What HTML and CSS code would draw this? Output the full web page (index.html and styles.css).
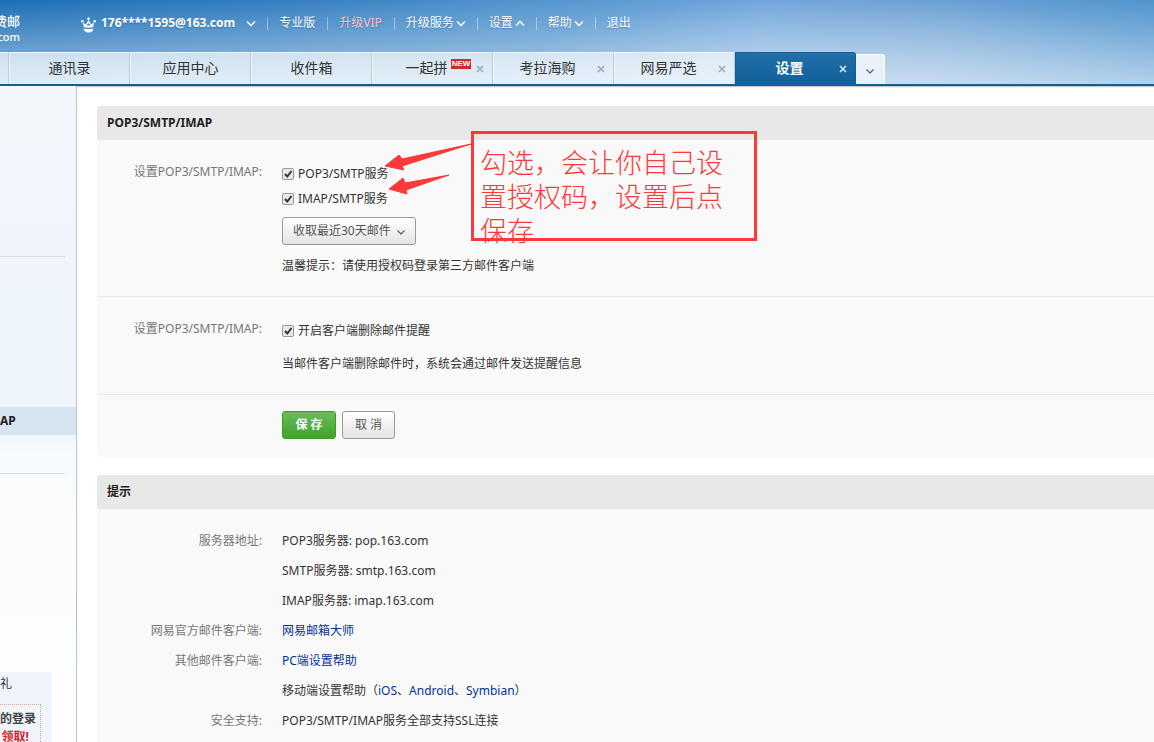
FILE: index.html
```html
<!DOCTYPE html>
<html lang="zh-CN">
<head>
<meta charset="utf-8">
<title>设置</title>
<link rel="stylesheet" href="styles.css">
</head>
<body>
<header class="header">
  <div class="topbar">
    <div class="brand"><span class="brand-name">费邮</span><span class="brand-domain">com</span></div>
    <svg class="crown" width="15" height="16" viewBox="0 0 15 16"><path d="M2 5.500l.8 4.500q4.700 1.500 9.400 0l.8-4.500-2.800 2L7.500 3 4.800 7.500z" fill="#fff"/><path d="M5 8.500l2.500-2.500L10 8.500z" fill="#4a8cc8"/><circle cx="1.300" cy="4.300" r="1.200" fill="#fff"/><circle cx="7.500" cy="1.700" r="1.300" fill="#fff"/><circle cx="13.700" cy="4.300" r="1.200" fill="#fff"/><path d="M2.500 11.500q5 1.600 10 0-.6 4-5 4t-5-4" fill="#fff"/></svg>
    <nav class="topnav">
      <a class="account" href="#">176****1595@163.com<svg class="chev" viewBox="0 0 8 5"><path d="M0 .5L4 4.500 8 .5"/></svg></a>
      <a href="#">专业版</a>
      <a class="vip" href="#">升级VIP</a>
      <a href="#">升级服务<svg class="chev" viewBox="0 0 8 5"><path d="M0 .5L4 4.500 8 .5"/></svg></a>
      <a href="#">设置<svg class="chev" viewBox="0 0 8 5"><path d="M0 4.500L4 .5l4 4"/></svg></a>
      <a href="#">帮助<svg class="chev" viewBox="0 0 8 5"><path d="M0 .5L4 4.500 8 .5"/></svg></a>
      <a href="#">退出</a>
    </nav>
  </div>
  <div class="tabs">
    <div class="tab tab-cut"></div>
    <div class="tab"><a href="#">通讯录</a></div>
    <div class="tab"><a href="#">应用中心</a></div>
    <div class="tab"><a href="#">收件箱</a></div>
    <div class="tab tab-closable"><a href="#">一起拼</a><span class="badge">NEW</span><button class="close" type="button" aria-label="关闭"><svg viewBox="0 0 8 8"><path d="M1 1l6 6M7 1L1 7"/></svg></button></div>
    <div class="tab tab-closable"><a href="#">考拉海购</a><button class="close" type="button" aria-label="关闭"><svg viewBox="0 0 8 8"><path d="M1 1l6 6M7 1L1 7"/></svg></button></div>
    <div class="tab tab-closable"><a href="#">网易严选</a><button class="close" type="button" aria-label="关闭"><svg viewBox="0 0 8 8"><path d="M1 1l6 6M7 1L1 7"/></svg></button></div>
    <div class="tab tab-closable tab-active"><a href="#">设置</a><button class="close" type="button" aria-label="关闭"><svg viewBox="0 0 8 8"><path d="M1 1l6 6M7 1L1 7"/></svg></button></div>
    <button class="tab-more" type="button" aria-label="更多"><svg class="chev" viewBox="0 0 8 5"><path d="M.5.5L4 4 7.500.5"/></svg></button>
  </div>
</header>
<div class="layout">
  <aside class="sidebar">
    <div class="side-group"></div>
    <div class="side-group side-group-current"><a class="side-item" href="#">AP</a></div>
    <div class="promo">
      <div class="promo-title">礼</div>
      <div class="promo-box"><span>的登录</span><em>领取!</em></div>
    </div>
  </aside>
  <main class="content">
    <section class="panel">
      <h2>POP3/SMTP/IMAP</h2>
      <form>
        <div class="row">
          <div class="label">设置POP3/SMTP/IMAP:</div>
          <div class="field">
            <label class="check"><input type="checkbox" checked>POP3/SMTP服务</label>
            <label class="check"><input type="checkbox" checked>IMAP/SMTP服务</label>
            <div class="select">
              <select aria-label="收取范围"><option>收取最近30天邮件</option></select>
              <svg class="chev" viewBox="0 0 8 5"><path d="M.5.5L4 4 7.500.5"/></svg>
            </div>
            <p>温馨提示：请使用授权码登录第三方邮件客户端</p>
          </div>
        </div>
        <div class="row">
          <div class="label">设置POP3/SMTP/IMAP:</div>
          <div class="field">
            <label class="check"><input type="checkbox" checked>开启客户端删除邮件提醒</label>
            <p>当邮件客户端删除邮件时，系统会通过邮件发送提醒信息</p>
          </div>
        </div>
        <div class="actions">
          <button class="btn btn-primary" type="button">保 存</button>
          <button class="btn" type="button">取 消</button>
        </div>
      </form>
      <svg class="arrows" width="90" height="60" viewBox="0 0 90 60"><path d="M5 36l14-11 3 4 69-15-69 22 2 4zM9 59l14-11 2 5 44-8-43 15 1 4z" fill="#fd3a39" stroke="#fd3a39"/></svg>
      <div class="note">勾选，会让你自己设置授权码，设置后点保存</div>
    </section>
    <section class="panel">
      <h2>提示</h2>
      <dl class="tips">
        <dt>服务器地址:</dt>
        <dd>POP3服务器: pop.163.com</dd>
        <dd>SMTP服务器: smtp.163.com</dd>
        <dd>IMAP服务器: imap.163.com</dd>
        <dt>网易官方邮件客户端:</dt>
        <dd><a href="#">网易邮箱大师</a></dd>
        <dt>其他邮件客户端:</dt>
        <dd><a href="#">PC端设置帮助</a></dd>
        <dd>移动端设置帮助（<a href="#">iOS</a>、<a href="#">Android</a>、<a href="#">Symbian</a>）</dd>
        <dt>安全支持:</dt>
        <dd>POP3/SMTP/IMAP服务全部支持SSL连接</dd>
      </dl>
    </section>
  </main>
</div>
</body>
</html>
```
FILE: styles.css
```css
* { box-sizing: border-box; }
body {
  margin: 0;
  height: 100vh;
  overflow: hidden;
  display: flex;
  flex-direction: column;
  font: 12px/18px "Noto Sans", "Noto Sans CJK SC", sans-serif;
  color: #333;
  background: #fff;
}
a { color: inherit; text-decoration: none; }
button, select, input { font: inherit; margin: 0; }
.chev { width: 8px; height: 5px; fill: none; stroke: currentColor; stroke-width: 1.300; overflow: visible; }

.header {
  flex: none;
  border-bottom: 2px solid #10609a;
  box-shadow: 0 1px 1px #c8c4c0;
  background:
    radial-gradient(340px 90px at 73% 100%, rgba(255,255,255,.2), rgba(255,255,255,0)),
    linear-gradient(180deg, rgba(255,255,255,0), rgba(255,255,255,.56)),
    linear-gradient(90deg, #1d6fb5 0%, #3680c2 25%, #5797cf 50%, #70a5db 66%, #6a9fd4 82%, #4f94cd 100%);
}
.topbar { height: 52px; display: flex; align-items: flex-start; color: #fff; }
.brand { width: 20px; margin: 13px 61px 0 0; display: flex; flex-direction: column; align-items: flex-end; line-height: 16px; overflow: hidden; flex: none; }
.brand-name { font-size: 13px; font-weight: 500; white-space: nowrap; }
.brand-domain { font-weight: 500; font-size: 11px; }
.crown { margin: 17px 5px 0 0; flex: none; }
.topnav { display: flex; align-items: center; margin-top: 14px; white-space: nowrap; text-shadow: 0 1px 1px rgba(0,50,110,.3); }
.topnav a { display: flex; align-items: center; padding: 0 12px; position: relative; }
.topnav a .chev { margin-left: 3px; stroke-width: 1.500; }
.topnav a + a::before { content: ""; position: absolute; left: 0; top: 3px; width: 1px; height: 13px; background: rgba(255,255,255,.4); }
.topnav .account { padding-left: 0; font-weight: bold; }
.topnav .account .chev { margin-left: 12px; }
.topnav .vip { color: #ffc2cb; }

.tabs { display: flex; align-items: flex-end; }
.tab {
  width: 121px;
  height: 32px;
  flex: none;
  display: flex;
  align-items: center;
  justify-content: center;
  position: relative;
  padding-bottom: 2px;
  font-size: 14px;
  background: linear-gradient(rgba(238,245,250,.74), rgba(243,248,252,.78));
  border-top: 1px solid #eef5fb;
  border-left: 1px solid #f2f7fb;
  border-right: 1px solid #bdcbd7;
}
.tab-cut { width: 9px; border-left: 0; }
.tab-closable { padding-right: 12px; }
.badge { position: absolute; left: 78px; top: 6px; width: 20px; height: 10px; background: #cf2b30; color: #fff; font: bold 8px/10px "Liberation Sans", sans-serif; text-align: center; }
.close { position: absolute; right: 8px; top: 12px; width: 8px; height: 8px; padding: 0; border: 0; background: none; color: #94adc2; display: flex; }
.close svg { width: 8px; height: 8px; stroke: currentColor; stroke-width: 1.600; }
.tab-active { background: linear-gradient(#226fa9, #10609a); border-color: #10609a; border-radius: 0 3px 0 0; color: #fff; font-weight: bold; }
.tab-active .close { color: #d7e7f3; }
.tab-more { width: 29px; height: 30px; padding: 0; border: 1px solid #fff; border-left: 0; border-bottom: 0; border-radius: 0 3px 0 0; background: #e9f2fa; color: #666; }

.layout { flex: 1; display: flex; min-height: 0; }
.sidebar {
  width: 77px;
  flex: none;
  overflow: hidden;
  border-right: 1px solid #b6c7d0;
  background: linear-gradient(#f2f7fc 0, #edf4fb 280px, #f0f6fb 350px, #f8fbfd 370px, #fdfdfe 580px);
}
.side-group { height: 171px; margin-right: 11px; border-bottom: 1px solid #d8dcdf; }
.side-group-current { height: 217px; padding-top: 150px; }
.side-item { display: block; height: 28px; margin-right: -11px; line-height: 28px; font-weight: bold; color: #222; background: #d7e5f1; }
.promo { width: 51px; height: 90px; margin-top: 198px; background: #eff5fa; overflow: hidden; padding-top: 3px; }
.promo-title { font-size: 12px; line-height: 18px; }
.promo-box { width: 41px; height: 60px; margin-top: 11px; padding: 5px 4px 0 0; border: 1px dotted #dfa58c; border-left: 0; font-size: 12px; font-weight: bold; color: #444; display: flex; flex-direction: column; align-items: flex-end; white-space: nowrap; }
.promo-box em { font-style: normal; color: #d8232e; padding-right: 7px; }

.content { flex: 1; min-width: 0; padding: 20px 0 0 20px; overflow: hidden; }
.panel { position: relative; background: #f9f9f9; border-radius: 3px 0 0 3px; margin-bottom: 18px; }
.panel h2 { margin: 0; padding: 0 10px; font-size: 12px; line-height: 34px; background: #e8e8e8; border-radius: 3px 0 0 0; color: #222; }
.row { display: grid; grid-template-columns: 165px 1fr; column-gap: 20px; padding: 21px 0; border-bottom: 1px solid #e8e8e8; }
.label { padding-top: 2px; text-align: right; color: #777; white-space: nowrap; }
.field p { margin: 12px 0 0; }
.check { display: flex; align-items: center; gap: 4px; height: 25px; }
.check input { appearance: none; width: 12px; height: 12px; border: 1px solid #999; border-radius: 2px; background: url("data:image/svg+xml,%3Csvg xmlns='http://www.w3.org/2000/svg' viewBox='0 0 10 10'%3E%3Cpath d='M2 5l2.300 2.500L8.500 2' fill='none' stroke='%23333' stroke-width='2'/%3E%3C/svg%3E") center / 10px 10px no-repeat #e8e8e8; }
.select { position: relative; width: 134px; margin-top: 6px; }
.select select { appearance: none; display: block; width: 100%; height: 28px; padding: 0 10px; border: 1px solid #999; border-radius: 3px; background: linear-gradient(#fff, #e4e4e4); color: #555; }
.select .chev { position: absolute; right: 11px; top: 13px; color: #666; pointer-events: none; }
.actions { display: flex; gap: 6px; padding: 16px 0 18px 185px; }
.btn { width: 53px; height: 28px; padding: 0; border: 1px solid #999; border-radius: 3px; background: linear-gradient(#fff, #e4e4e4); color: #555; }
.btn-primary { width: 54px; border-color: #3f9a2c; background: linear-gradient(#6cbd58, #3fa22a); color: #fff; font-weight: bold; }
.arrows { position: absolute; left: 283px; top: 24px; overflow: visible; }
.note { position: absolute; left: 374px; top: 25px; width: 286px; height: 110px; padding: 11px 26px 0 6px; border: 3px solid #fd3a39; color: #fd3a39; font: 300 27px/34px "Noto Sans CJK SC", sans-serif; }
.tips { display: grid; grid-template-columns: 165px 1fr; column-gap: 20px; margin: 0; padding: 17px 0; line-height: 30px; }
.tips dt { text-align: right; color: #777; }
.tips dd { grid-column: 2; margin: 0; }
.tips a { color: #003399; }
```
